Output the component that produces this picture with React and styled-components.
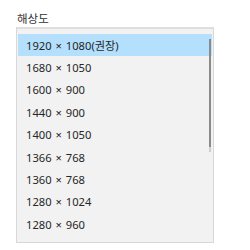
import styled, { createGlobalStyle } from "styled-components";

const GlobalStyle = createGlobalStyle`
  body {
    margin: 0;
    background: #ffffff;
    font-family: "Noto Sans", "Noto Sans CJK KR", sans-serif;
  }
`;

const Page = styled.div`
  width: 250px;
  height: 250px;
  padding: 11px 0 0 16px;
  box-sizing: border-box;
`;

const Label = styled.div`
  font-size: 11.5px;
  line-height: 16px;
  color: #333333;
  padding-left: 1px;
`;

const ListBox = styled.div`
  position: relative;
  width: 198px;
  height: 216px;
  box-sizing: border-box;
  background: #f2f2f2;
  border: 1px solid #d8d8d8;
  border-top: 2px solid #dedede;
  padding: 5px 1px 0 1px;
`;

const Item = styled.div`
  height: 22.4px;
  display: flex;
  align-items: center;
  padding-left: 8px;
  font-size: 11.2px;
  word-spacing: 1px;
  color: #262626;
  background: ${(p) => (p.selected ? "#b4e0fd" : "transparent")};
`;

const ScrollThumb = styled.div`
  position: absolute;
  top: 10px;
  right: 2px;
  width: 2px;
  height: 108px;
  background: #8a8a8a;
  &::after {
    content: "";
    position: absolute;
    top: 108px;
    left: 0;
    width: 2px;
    height: 5px;
    background: #cfcfcf;
  }
`;

const resolutions = [
  "1920 × 1080(권장)",
  "1680 × 1050",
  "1600 × 900",
  "1440 × 900",
  "1400 × 1050",
  "1366 × 768",
  "1360 × 768",
  "1280 × 1024",
  "1280 × 960",
];

export default function App() {
  return (
    <Page>
      <GlobalStyle />
      <Label>해상도</Label>
      <ListBox>
        {resolutions.map((r, i) => (
          <Item key={r} selected={i === 0}>
            {r}
          </Item>
        ))}
        <ScrollThumb />
      </ListBox>
    </Page>
  );
}
